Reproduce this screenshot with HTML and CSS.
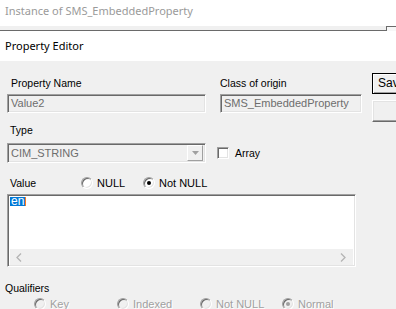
FILE: index.html
```html
<!DOCTYPE html>
<html>
<head>
<meta charset="utf-8">
<link rel="stylesheet" href="styles.css">
</head>
<body>
<div class="screen">
  <div class="titlebar">Instance of SMS_EmbeddedProperty</div>
  <div class="frame-strip"><span class="frame-corner"></span></div>
  <div class="dlg-title">Property Editor</div>
  <div class="content">
    <div class="form">
      <div class="row1">
        <div class="field f-name">
          <div class="lbl lbl-name">Property Name</div>
          <div class="box">Value2</div>
        </div>
        <div class="field f-class">
          <div class="lbl">Class of origin</div>
          <div class="box">SMS_EmbeddedProperty</div>
        </div>
      </div>
      <div class="lbl lbl-type">Type</div>
      <div class="row-type">
        <div class="combo">
          <span class="combo-text">CIM_STRING</span>
          <span class="combo-btn"><svg width="7" height="4" viewBox="0 0 7 4"><path d="M0 0H7L3.5 4Z" fill="#a0a0a0"/></svg></span>
        </div>
        <div class="check"><span class="cb"></span><span>Array</span></div>
      </div>
      <div class="row-value">
        <span class="lbl lbl-value">Value</span>
        <span class="opt opt-null"><span class="radio"></span><span>NULL</span></span>
        <span class="opt"><span class="radio on"></span><span>Not NULL</span></span>
      </div>
      <div class="textarea">
        <div class="ta-text"><span class="sel">en</span><span class="caret"></span></div>
        <div class="hscroll">
          <svg width="6" height="9" viewBox="0 0 6 9"><path d="M5 0.5L1 4.5L5 8.5" fill="none" stroke="#b4b4b4" stroke-width="1.3"/></svg>
          <svg width="6" height="9" viewBox="0 0 6 9"><path d="M1 0.5L5 4.5L1 8.5" fill="none" stroke="#b4b4b4" stroke-width="1.3"/></svg>
        </div>
      </div>
      <div class="lbl lbl-qual">Qualifiers</div>
      <div class="qual-row">
        <span class="qopt q-key"><span class="radio dis"></span><span>Key</span></span>
        <span class="qopt q-idx"><span class="radio dis"></span><span>Indexed</span></span>
        <span class="qopt q-nn"><span class="radio dis"></span><span>Not NULL</span></span>
        <span class="qopt"><span class="radio dis on"></span><span>Normal</span></span>
      </div>
    </div>
    <div class="buttons">
      <div class="btn btn-default">Save</div>
      <div class="btn"><span class="btn-mark"></span></div>
    </div>
  </div>
</div>
</body>
</html>
```
FILE: styles.css
```css
html, body {
  margin: 0;
  padding: 0;
}
body {
  width: 396px;
  height: 309px;
  overflow: hidden;
  background: #f0f0f0;
  font-family: "Liberation Sans", Arial, sans-serif;
  font-size: 10.5px;
  color: #000;
}
.screen {
  position: relative;
  width: 396px;
  height: 309px;
  overflow: hidden;
}
.titlebar {
  height: 26px;
  background: #fff;
  color: #9a9a9a;
  font-family: "Noto Sans", "Open Sans", sans-serif;
  font-size: 11px;
  line-height: 22px;
  padding-left: 5px;
  white-space: nowrap;
}
.frame-strip {
  position: relative;
  height: 4px;
  background: #f0f0f0;
  border-bottom: 1px solid #6a6a6a;
}
.frame-corner {
  position: absolute;
  left: 386px;
  top: 0;
  width: 12px;
  height: 5px;
  border-top: 1px solid #6a6a6a;
  border-left: 1px solid #6a6a6a;
  box-sizing: border-box;
  background: #f7f7f7;
}
.dlg-title {
  height: 30px;
  background: #fff;
  font-family: "Noto Sans", "Open Sans", sans-serif;
  font-size: 11px;
  line-height: 29px;
  padding-left: 5px;
  white-space: nowrap;
}
.content {
  display: flex;
  padding: 12px 0 0 7px;
}
.form {
  width: 355px;
  flex: none;
  margin-top: 4px;
  display: flex;
  flex-direction: column;
}
.lbl {
  line-height: 13px;
  height: 13px;
  white-space: nowrap;
}
.row1 {
  display: flex;
  gap: 14px;
}
.field {
  display: flex;
  flex-direction: column;
  gap: 4px;
}
.f-name { width: 199px; }
.f-class { width: 142px; }
.lbl-name { padding-left: 4px; }
.box {
  height: 19px;
  box-sizing: border-box;
  border-top: 1px solid #a0a0a0;
  border-left: 1px solid #a0a0a0;
  border-right: 1px solid #fff;
  border-bottom: 1px solid #fff;
  box-shadow: inset 1px 1px 0 #696969, inset -1px -1px 0 #e3e3e3;
  color: #6d6d6d;
  font-size: 11px;
  line-height: 17px;
  padding-left: 3px;
  white-space: nowrap;
  overflow: hidden;
}
.lbl-type {
  margin-top: 11px;
  padding-left: 3px;
}
.row-type {
  margin-top: 6px;
  display: flex;
  align-items: center;
  gap: 11px;
}
.combo {
  width: 199px;
  height: 20px;
  box-sizing: border-box;
  display: flex;
  align-items: center;
  justify-content: space-between;
  border-top: 1px solid #a0a0a0;
  border-left: 1px solid #a0a0a0;
  border-right: 1px solid #fff;
  border-bottom: 1px solid #fff;
  box-shadow: inset 1px 1px 0 #696969, inset -1px -1px 0 #e3e3e3;
  color: #6d6d6d;
  font-size: 11px;
}
.combo-text {
  padding-left: 3px;
  white-space: nowrap;
}
.combo-btn {
  width: 16px;
  height: 16px;
  margin-right: 2px;
  box-sizing: border-box;
  display: flex;
  align-items: center;
  justify-content: center;
  background: #f0f0f0;
  border-top: 1px solid #fff;
  border-left: 1px solid #fff;
  border-right: 1px solid #a0a0a0;
  border-bottom: 1px solid #a0a0a0;
}
.check {
  display: flex;
  align-items: center;
  gap: 6px;
}
.cb {
  width: 12px;
  height: 12px;
  box-sizing: border-box;
  background: #fff;
  border-top: 1px solid #a0a0a0;
  border-left: 1px solid #a0a0a0;
  border-right: 1px solid #fff;
  border-bottom: 1px solid #fff;
  box-shadow: inset 1px 1px 0 #696969, inset -1px -1px 0 #e3e3e3;
}
.row-value {
  margin-top: 13px;
  height: 14px;
  display: flex;
  align-items: center;
}
.lbl-value {
  width: 74px;
  padding-left: 3px;
  box-sizing: border-box;
}
.opt {
  display: flex;
  align-items: center;
  gap: 4px;
  font-size: 11px;
}
.opt-null { width: 62px; }
.radio {
  width: 12px;
  height: 12px;
  box-sizing: border-box;
  border-radius: 50%;
  background: #fff;
  border: 1px solid;
  border-color: #a0a0a0 #fff #fff #a0a0a0;
  box-shadow: inset 1px 1px 0 #696969, inset -1px -1px 0 #e3e3e3;
  position: relative;
  flex: none;
}
.radio.on::after {
  content: "";
  position: absolute;
  left: 3px;
  top: 3px;
  width: 4px;
  height: 4px;
  border-radius: 50%;
  background: #000;
}
.radio.dis {
  background: #f0f0f0;
}
.radio.dis.on::after {
  background: #a0a0a0;
}
.textarea {
  margin-top: 4px;
  width: 349px;
  height: 73px;
  box-sizing: border-box;
  background: #fff;
  border-top: 1px solid #a0a0a0;
  border-left: 1px solid #a0a0a0;
  border-right: 1px solid #fff;
  border-bottom: 1px solid #fff;
  box-shadow: inset 1px 1px 0 #696969, inset -1px -1px 0 #e3e3e3;
  display: flex;
  flex-direction: column;
  justify-content: space-between;
}
.ta-text {
  padding: 2px 0 0 2px;
  display: flex;
  align-items: flex-start;
  font-size: 12px;
  line-height: 9px;
}
.sel {
  background: #0078d7;
  color: #fff;
  padding: 0 1px;
  height: 9px;
  line-height: 9px;
}
.caret {
  width: 1px;
  height: 9px;
  background: #ff7a1a;
}
.hscroll {
  height: 16px;
  margin: 0 2px 1px 2px;
  background: #f0f0f0;
  display: flex;
  align-items: center;
  justify-content: space-between;
  padding: 0 7px 0 6px;
}
.lbl-qual {
  margin-top: 15px;
  margin-left: -2px;
}
.qual-row {
  margin-top: 2px;
  height: 14px;
  display: flex;
  align-items: center;
  padding-left: 27px;
  color: #a0a0a0;
  text-shadow: 1px 1px 0 #fff;
  font-size: 11px;
}
.qopt {
  display: flex;
  align-items: center;
  gap: 4px;
}
.q-key { width: 83px; }
.q-idx { width: 83px; }
.q-nn { width: 82px; }
.buttons {
  margin-left: 10px;
  display: flex;
  flex-direction: column;
  gap: 6px;
  flex: none;
}
.btn {
  width: 75px;
  height: 22px;
  box-sizing: border-box;
  background: #f0f0f0;
  border-top: 1px solid #fff;
  border-left: 1px solid #fff;
  border-right: 1px solid #696969;
  border-bottom: 1px solid #696969;
  box-shadow: inset -1px -1px 0 #a0a0a0, inset 1px 1px 0 #e3e3e3;
  font-size: 12px;
  line-height: 19px;
  padding-left: 5px;
  white-space: nowrap;
}
.btn-default {
  height: 21px;
  outline: 1px solid #000;
  outline-offset: -1px;
  border-color: #000 #696969 #696969 #000;
  box-shadow: inset 1px 1px 0 #fff, inset -1px -1px 0 #a0a0a0;
}
.btn-mark {
  display: inline-block;
  margin-left: 18px;
  width: 2px;
  height: 3px;
  background: #f2a23a;
}
```
